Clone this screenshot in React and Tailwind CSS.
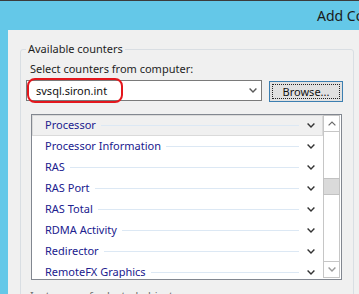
const rows = [
  "Processor",
  "Processor Information",
  "RAS",
  "RAS Port",
  "RAS Total",
  "RDMA Activity",
  "Redirector",
  "RemoteFX Graphics",
];

function Chev({ color = "#333333" }) {
  return (
    <svg width="8" height="5" viewBox="0 0 8 5" className="shrink-0">
      <path d="M0.6 0.6 L4 4 L7.4 0.6" fill="none" stroke={color} strokeWidth="1.4" />
    </svg>
  );
}

function ChevUp({ color = "#6a6a6a" }) {
  return (
    <svg width="8" height="5" viewBox="0 0 8 5" className="shrink-0">
      <path d="M0.6 4.4 L4 1 L7.4 4.4" fill="none" stroke={color} strokeWidth="1.2" />
    </svg>
  );
}

export default function App() {
  return (
    <div className="w-[359px] h-[294px] overflow-hidden bg-[#64c8e8] flex flex-col font-['Noto_Sans','Liberation_Sans',sans-serif]">
      <div className="h-px shrink-0 bg-[#3c3c3c]" />
      <div className="h-[29px] shrink-0 flex items-center pl-[317px] whitespace-nowrap text-[14px] text-[#1a1a1a] leading-none">
        Add Counters
      </div>
      <div className="flex-1 ml-[8px] bg-[#f0f0f0] pl-[12px] pt-[19px] overflow-hidden">
        <div className="relative w-[334px] h-[300px] border border-[#d9dee3] rounded-[3px]">
          <span className="absolute left-[5px] -top-[9px] px-[2px] bg-[#f0f0f0] text-[11px] leading-[16px] text-[#1e1e1e] whitespace-nowrap">
            Available counters
          </span>
          <div className="flex flex-col">
            <div className="mt-[11px] pl-[9px] text-[11px] leading-[16px] text-[#1e1e1e] whitespace-nowrap">
              Select counters from computer:
            </div>
            <div className="mt-[3px] pl-[5px] flex items-start">
              <div className="relative w-[236px] h-[21px] border border-[#7a7a7a] bg-white flex items-center pl-[9px] pr-[4px]">
                <span className="flex-1 text-[11px] leading-[16px] text-[#111111] whitespace-nowrap">svsql.siron.int</span>
                <Chev color="#5a5a5a" />
                <div className="absolute left-0 -top-[3px] w-[96px] h-[25px] border-2 border-[#e3161c] rounded-[8px]" />
              </div>
              <div className="ml-[7px] mt-[1px] w-[74px] h-[21px] border border-[#3c7fb1] bg-[#e1e1e1] p-[2px]">
                <div className="w-full h-full border border-dotted border-[#222222] flex items-center justify-center text-[11px] leading-none text-[#111111]">
                  Browse...
                </div>
              </div>
            </div>
            <div className="mt-[12px] ml-[10px] w-[311px] h-[166px] border border-[#828790] bg-white pr-px pb-px flex">
              <div className="flex-1 flex flex-col overflow-hidden">
                {rows.map((r, i) => (
                  <div
                    key={r}
                    className={
                      "h-[21px] shrink-0 flex items-center pl-[12px] pr-[7px] border " +
                      (i === 0 ? "bg-[#f0f0f0] border-[#dadada]" : "border-transparent")
                    }
                  >
                    <span className="mb-[2px] text-[11px] leading-[16px] text-[#20208e] whitespace-nowrap">{r}</span>
                    <div className="ml-[5px] flex-1 h-px bg-[#dce8f4]" />
                    <div className="ml-[8px] flex">
                      <Chev color="#333333" />
                    </div>
                  </div>
                ))}
              </div>
              <div className="w-[17px] flex flex-col">
                <div className="h-[17px] shrink-0 border border-[#c6c6c6] flex items-center justify-center">
                  <ChevUp />
                </div>
                <div className="flex-1 border-x border-[#c6c6c6] flex flex-col">
                  <div className="mt-[46px] -mx-px h-[17px] bg-[#dadada] border border-[#c2c2c2]" />
                </div>
                <div className="h-[17px] shrink-0 border border-[#c6c6c6] flex items-center justify-center">
                  <Chev color="#9a9a9a" />
                </div>
              </div>
            </div>
            <div className="mt-[8px] pl-[9px] text-[11px] leading-[16px] text-[#6d6d6d] whitespace-nowrap">
              Instances of selected object:
            </div>
          </div>
        </div>
      </div>
    </div>
  );
}
